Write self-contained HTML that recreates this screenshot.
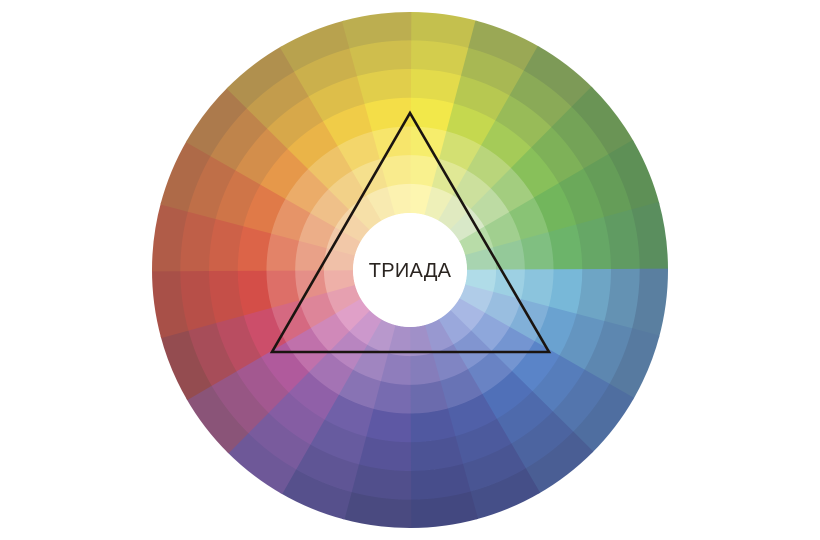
<!DOCTYPE html>
<html><head><meta charset="utf-8">
<style>
html,body{margin:0;padding:0;background:#fff;width:820px;height:540px;overflow:hidden}
svg{display:block}
text{font-family:"Liberation Sans","DejaVu Sans",sans-serif}
</style></head>
<body>
<svg id="s" width="820" height="540" viewBox="0 0 820 540" xmlns="http://www.w3.org/2000/svg">
<g id="w"></g>
<circle cx="410" cy="270" r="57" fill="#fff"/>
<polygon points="410,113 549,352 272,352" fill="none" stroke="#1a1410" stroke-width="2.6" stroke-linejoin="miter"/>
<text x="410" y="277" text-anchor="middle" font-size="20" fill="#2a2420" letter-spacing="0.3">ТРИАДА</text>
</svg>
<script>
var C=[["#c4c04e","#f2e84a","#fdf6b0"],["#9aa855","#c5d84f","#eef0b8"],["#7d9a57","#a5cb58","#e0eac0"],["#6a9455","#88c05a","#d8e8c8"],["#5e9056","#72b65c","#b8dca8"],["#5a8e5e","#6cb46a","#a8d4b0"],["#5a7fa0","#78b8d8","#b0dce8"],["#577aa0","#6aa2d0","#b0cce8"],["#4f6ea0","#5a84c8","#a8b8e4"],["#4a5e94","#5070b8","#9aa8dc"],["#454f88","#5060a8","#9898d0"],["#434880","#5058a0","#a090c8"],["#4a4a80","#5e58a4","#a890c8"],["#56508c","#7060a8","#b898cc"],["#6e5898","#9060a8","#cc98cc"],["#8a5478","#b05a9c","#e0a0c8"],["#944c50","#cc4e6a","#e6a0b0"],["#a85048","#d44e48","#eeb0a8"],["#b05c48","#dc6448","#f0c0a8"],["#ae6a48","#e07a48","#f2c8a8"],["#ac7a4c","#e6984a","#f4d4a8"],["#b0904e","#eab448","#f6e0a8"],["#b8a24e","#f0cc48","#f8eab0"],["#bcae50","#f4de48","#fcf2b0"]];
function h(c){return [parseInt(c.substr(1,2),16),parseInt(c.substr(3,2),16),parseInt(c.substr(5,2),16)]}
function mix(a,b,t){a=h(a);b=h(b);return "rgb("+a.map(function(v,i){return Math.round(v+(b[i]-v)*t)}).join(",")+")"}
var cx=410,cy=270,R=258,r0=57,n=7,dr=(R-r0)/n,g=document.getElementById("w"),out="";
function pt(r,a){var t=(a-90)*Math.PI/180;return (cx+r*Math.cos(t)).toFixed(2)+","+(cy+r*Math.sin(t)).toFixed(2)}
for(var i=0;i<24;i++){var a1=i*15-0.3,a2=i*15+15.3;
for(var k=0;k<n;k++){var ro=R-k*dr+(k==0?0:0.4),ri=R-(k+1)*dr;
var col=k<=3?mix(C[i][0],C[i][1],k/3):mix(C[i][1],C[i][2],(k-3)/3);
out+='<path fill="'+col+'" d="M'+pt(ro,a1)+'A'+ro+','+ro+' 0 0 1 '+pt(ro,a2)+'L'+pt(ri,a2)+'A'+ri+','+ri+' 0 0 0 '+pt(ri,a1)+'Z"/>';}}
g.innerHTML=out;
</script>
</body></html>
